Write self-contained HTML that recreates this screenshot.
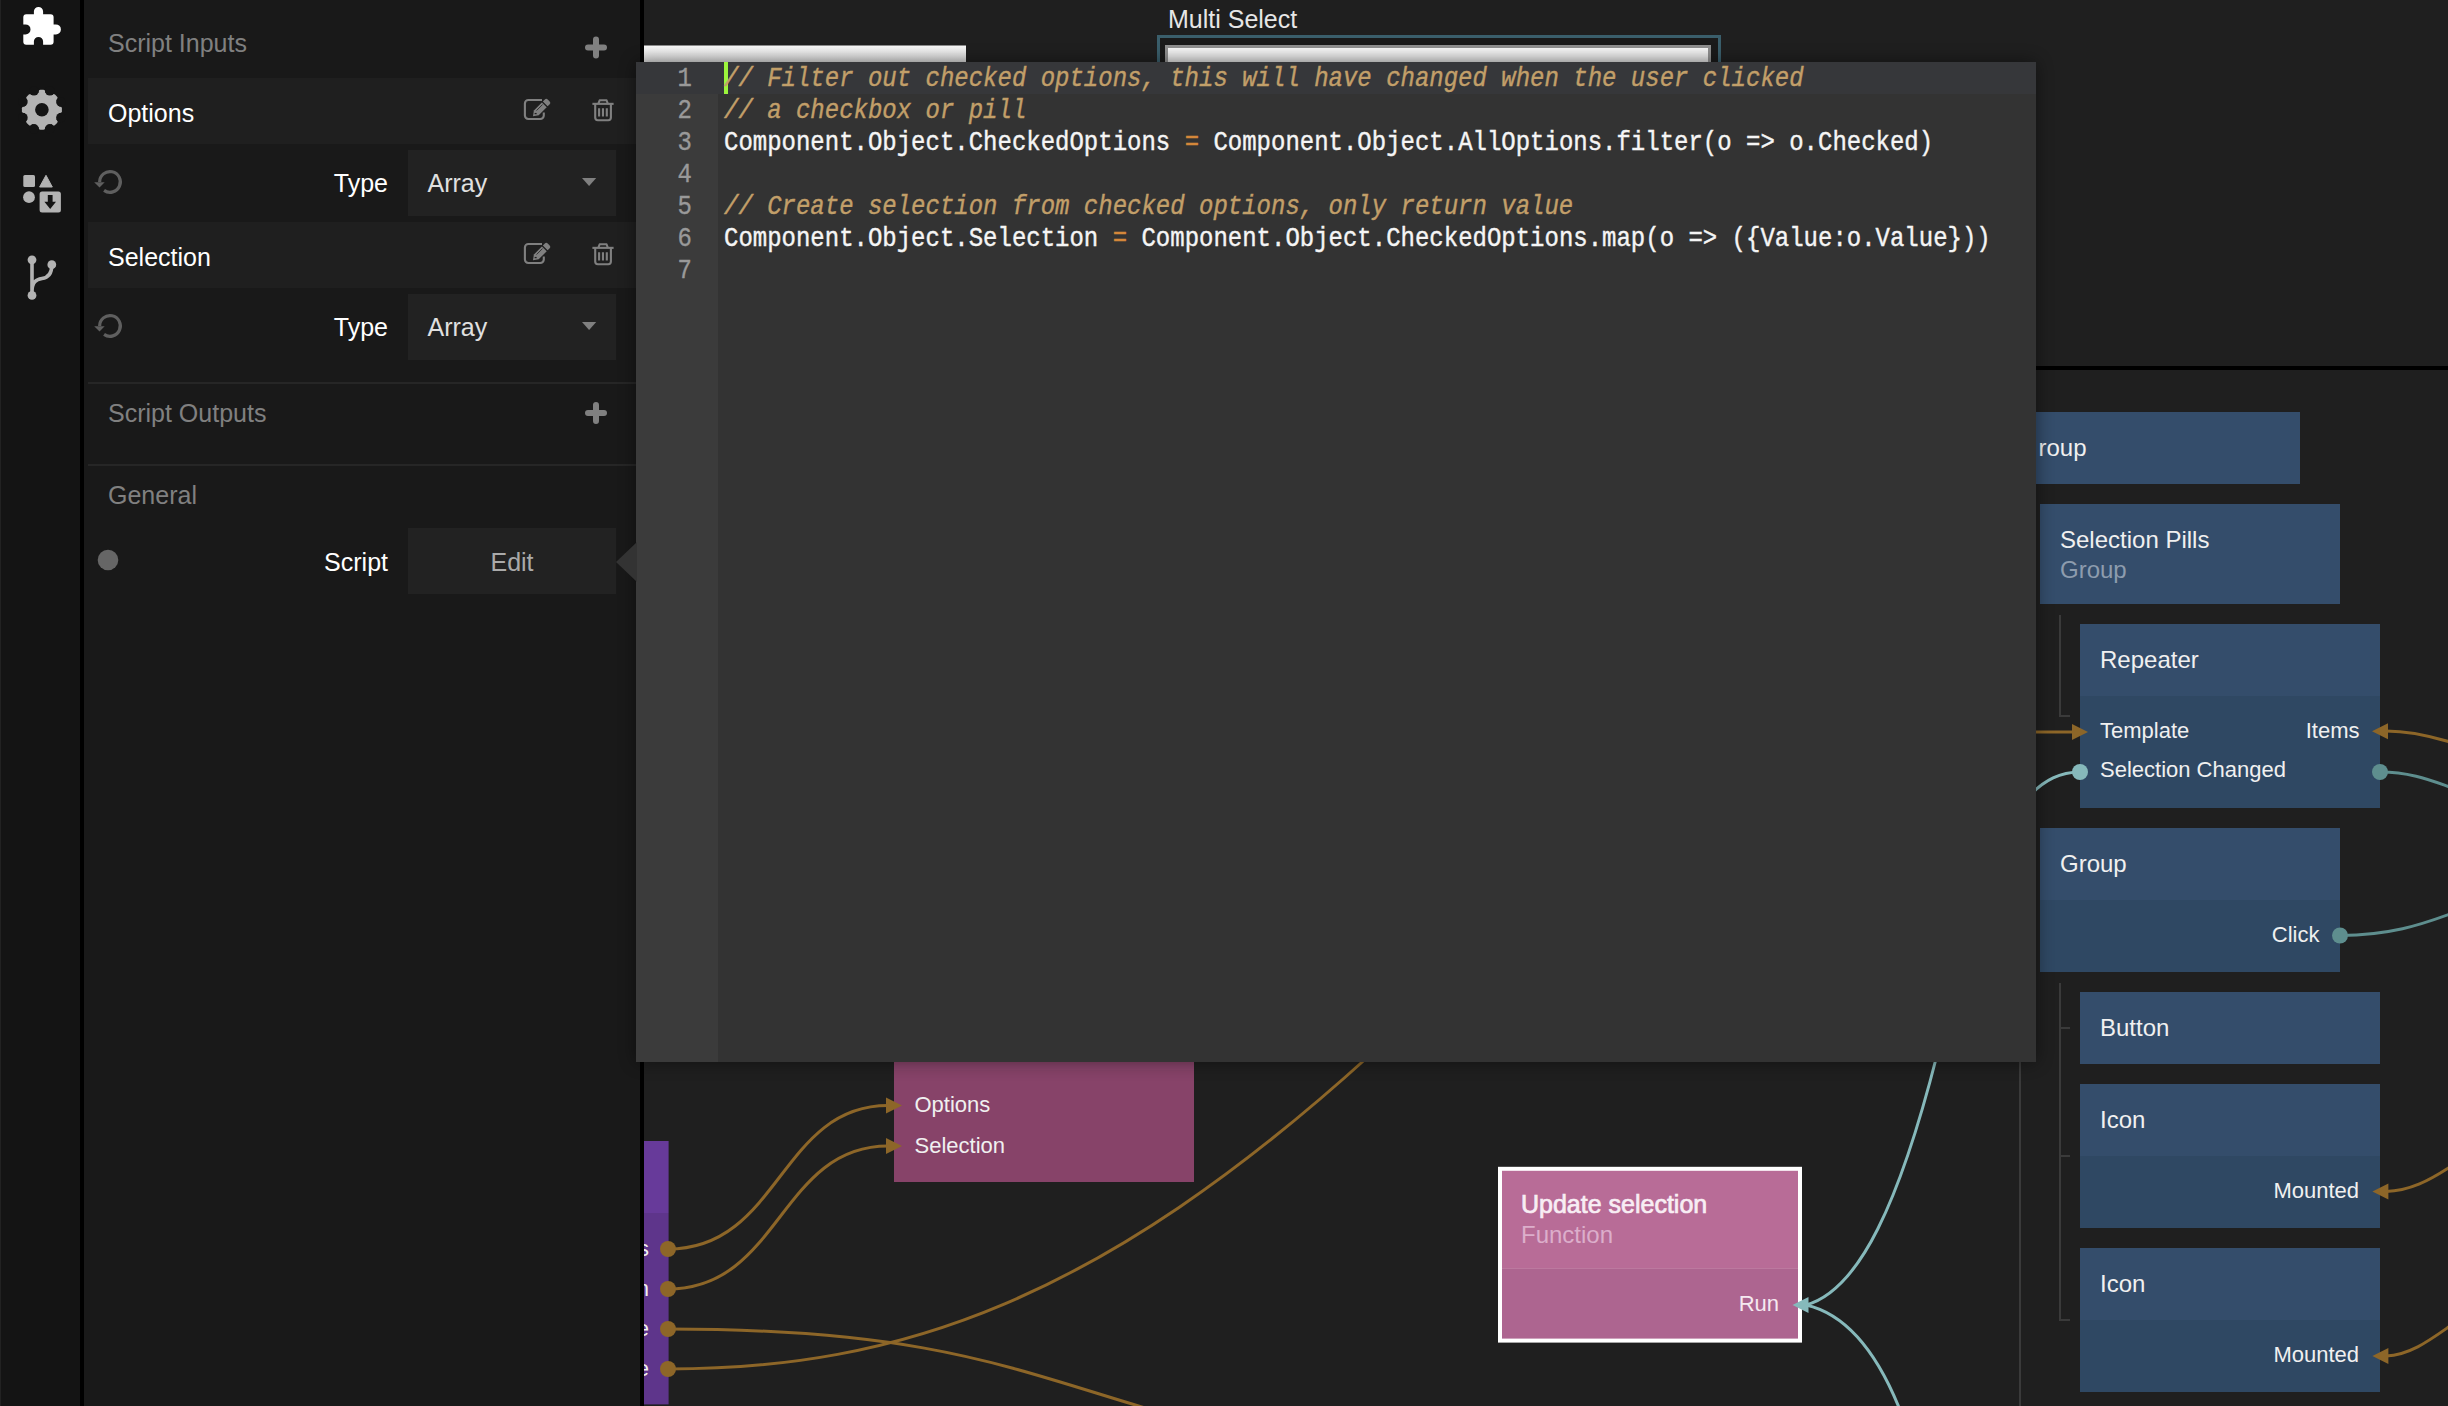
<!DOCTYPE html>
<html><head><meta charset="utf-8"><style>
html,body{margin:0;padding:0;background:#1f1f1f;overflow:hidden;width:2448px;height:1406px;}
svg{display:block;}

</style></head><body>
<svg width="2448" height="1406" viewBox="0 0 2448 1406"><rect x="0" y="0" width="2448" height="1406" fill="#1f1f1f" />
<rect x="0" y="0" width="80" height="1406" fill="#141414" />
<rect x="0" y="0" width="1" height="1406" fill="#222222" />
<rect x="80" y="0" width="4" height="1406" fill="#000000" />
<rect x="84" y="0" width="556" height="1406" fill="#191919" />
<rect x="640" y="0" width="4" height="1406" fill="#000000" />
<path fill="#ffffff" d="M26.3,14.2 H33.9 V11.6 A4.6,4.6 0 0 1 43.1,11.6 V14.2 H50.6 A3,3 0 0 1 53.6,17.2 V24.4 H55.9 A5,5 0 0 1 55.9,34.4 H53.6 V41.7 A3,3 0 0 1 50.6,44.7 H43.1 V41.6 A4.6,4.6 0 0 0 33.9,41.6 V44.7 H26.3 A3,3 0 0 1 23.3,41.7 V34.4 H25.5 A5,5 0 0 0 25.5,24.4 H23.3 V17.2 A3,3 0 0 1 26.3,14.2 Z"/>
<circle cx="41.9" cy="109.8" r="17.4" fill="#b3b3b3"/><rect x="38.6" y="89.8" width="6.6" height="8" rx="1.8" fill="#b3b3b3" transform="rotate(0 41.9 109.8)"/><rect x="38.6" y="89.8" width="6.6" height="8" rx="1.8" fill="#b3b3b3" transform="rotate(45 41.9 109.8)"/><rect x="38.6" y="89.8" width="6.6" height="8" rx="1.8" fill="#b3b3b3" transform="rotate(90 41.9 109.8)"/><rect x="38.6" y="89.8" width="6.6" height="8" rx="1.8" fill="#b3b3b3" transform="rotate(135 41.9 109.8)"/><rect x="38.6" y="89.8" width="6.6" height="8" rx="1.8" fill="#b3b3b3" transform="rotate(180 41.9 109.8)"/><rect x="38.6" y="89.8" width="6.6" height="8" rx="1.8" fill="#b3b3b3" transform="rotate(225 41.9 109.8)"/><rect x="38.6" y="89.8" width="6.6" height="8" rx="1.8" fill="#b3b3b3" transform="rotate(270 41.9 109.8)"/><rect x="38.6" y="89.8" width="6.6" height="8" rx="1.8" fill="#b3b3b3" transform="rotate(315 41.9 109.8)"/><circle cx="60.93" cy="117.68" r="4.8" fill="#141414"/><circle cx="49.78" cy="128.83" r="4.8" fill="#141414"/><circle cx="34.02" cy="128.83" r="4.8" fill="#141414"/><circle cx="22.87" cy="117.68" r="4.8" fill="#141414"/><circle cx="22.87" cy="101.92" r="4.8" fill="#141414"/><circle cx="34.02" cy="90.77" r="4.8" fill="#141414"/><circle cx="49.78" cy="90.77" r="4.8" fill="#141414"/><circle cx="60.93" cy="101.92" r="4.8" fill="#141414"/><circle cx="41.9" cy="109.8" r="6.8" fill="#141414"/>
<rect x="23.3" y="175" width="11.7" height="12" rx="1.5" fill="#b3b3b3"/>
<path d="M46,175.3 L52.3,187 L39.6,187 Z" fill="#b3b3b3" stroke="#b3b3b3" stroke-width="1" stroke-linejoin="round"/>
<circle cx="29" cy="197.2" r="5.9" fill="#b3b3b3"/>
<rect x="39.6" y="191.5" width="21.3" height="21.1" rx="2.5" fill="#b3b3b3"/>
<path d="M47.8,195 h4.8 v6.8 h3.4 l-5.8,7.2 l-5.8,-7.2 h3.4 z" fill="#141414"/>
<g fill="#b3b3b3"><circle cx="32" cy="259.8" r="4.4"/><circle cx="51.8" cy="264.7" r="4.4"/><circle cx="32" cy="295.4" r="4.4"/></g>
<path d="M32,260 V295 M32,292 C32,282 36,279.5 42,278.5 C49,277.5 51.8,272 51.8,265" stroke="#b3b3b3" stroke-width="3.6" fill="none"/>
<text x="108" y="52" font-size="25" fill="#808080" text-anchor="start" font-family="Liberation Sans, sans-serif" >Script Inputs</text>
<path d="M588,47.4 H604 M596,39.4 V55.4" stroke="#808080" stroke-width="6" stroke-linecap="round"/>
<rect x="88" y="78" width="560" height="66" fill="#1f1f1f" />
<text x="108" y="122" font-size="25" fill="#ffffff" text-anchor="start" font-family="Liberation Sans, sans-serif" >Options</text>
<path d="M542.00,100.00 H528.4 " stroke="none"/>
<path d="M542.00,100.00 H528.40 a3.5,3.5 0 0 0 -3.5,3.5 V115.50 a3.5,3.5 0 0 0 3.5,3.5 H540.30 a3.5,3.5 0 0 0 3.5,-3.5 V112.60" stroke="#808080" stroke-width="2.1" fill="none"/>
<path d="M533.00,116.20 L533.85,110.54 L541.91,102.48 L546.72,107.29 L538.66,115.35 Z" fill="#808080"/>
<path d="M542.83,101.56 L544.88,99.51 Q546.29,98.10 547.71,99.51 L549.69,101.49 Q551.10,102.91 549.69,104.32 L547.64,106.37 Z" fill="#808080"/>
<path d="M536.54,110.54 L542.55,104.53" stroke="#1f1f1f" stroke-width="0.8"/>
<path d="M534.63,113.58 L536.61,113.58" stroke="#1f1f1f" stroke-width="1.3"/>
<path d="M592.4,103.85 H613.6" stroke="#808080" stroke-width="2.1"/>
<path d="M598.3,103.85 L599.6,100.3 H606.6 L607.9,103.85" stroke="#808080" stroke-width="2" fill="none" stroke-linejoin="round"/>
<path d="M595.2,103.85 V117.6 a2.6,2.6 0 0 0 2.6,2.6 H608.3 a2.6,2.6 0 0 0 2.6,-2.6 V103.85" stroke="#808080" stroke-width="2.1" fill="none"/>
<path d="M599.1,108.2 V116.5 M602.95,108.2 V116.5 M606.8,108.2 V116.5" stroke="#808080" stroke-width="2.1"/>
<path d="M99.65,181.90 A10.35,10.35 0 1 1 104.06,190.38" stroke="#5f5f5f" stroke-width="3.2" fill="none"/>
<path d="M94.20,182.30 L104.70,182.30 L99.50,187.50 Z" fill="#5f5f5f"/>
<text x="388" y="192" font-size="25" fill="#ffffff" text-anchor="end" font-family="Liberation Sans, sans-serif" >Type</text>
<rect x="408" y="150" width="208" height="66" fill="#222222" />
<text x="427.5" y="192" font-size="25" fill="#e0e0e0" text-anchor="start" font-family="Liberation Sans, sans-serif" >Array</text>
<path d="M582,178 H596.2 L589.1,186 Z" fill="#808080"/>
<rect x="88" y="222" width="560" height="66" fill="#1f1f1f" />
<text x="108" y="266" font-size="25" fill="#ffffff" text-anchor="start" font-family="Liberation Sans, sans-serif" >Selection</text>
<path d="M542.00,244.00 H528.4 " stroke="none"/>
<path d="M542.00,244.00 H528.40 a3.5,3.5 0 0 0 -3.5,3.5 V259.50 a3.5,3.5 0 0 0 3.5,3.5 H540.30 a3.5,3.5 0 0 0 3.5,-3.5 V256.60" stroke="#808080" stroke-width="2.1" fill="none"/>
<path d="M533.00,260.20 L533.85,254.54 L541.91,246.48 L546.72,251.29 L538.66,259.35 Z" fill="#808080"/>
<path d="M542.83,245.56 L544.88,243.51 Q546.29,242.10 547.71,243.51 L549.69,245.49 Q551.10,246.91 549.69,248.32 L547.64,250.37 Z" fill="#808080"/>
<path d="M536.54,254.54 L542.55,248.53" stroke="#1f1f1f" stroke-width="0.8"/>
<path d="M534.63,257.58 L536.61,257.58" stroke="#1f1f1f" stroke-width="1.3"/>
<path d="M592.4,247.85 H613.6" stroke="#808080" stroke-width="2.1"/>
<path d="M598.3,247.85 L599.6,244.3 H606.6 L607.9,247.85" stroke="#808080" stroke-width="2" fill="none" stroke-linejoin="round"/>
<path d="M595.2,247.85 V261.6 a2.6,2.6 0 0 0 2.6,2.6 H608.3 a2.6,2.6 0 0 0 2.6,-2.6 V247.85" stroke="#808080" stroke-width="2.1" fill="none"/>
<path d="M599.1,252.2 V260.5 M602.95,252.2 V260.5 M606.8,252.2 V260.5" stroke="#808080" stroke-width="2.1"/>
<path d="M99.65,325.90 A10.35,10.35 0 1 1 104.06,334.38" stroke="#5f5f5f" stroke-width="3.2" fill="none"/>
<path d="M94.20,326.30 L104.70,326.30 L99.50,331.50 Z" fill="#5f5f5f"/>
<text x="388" y="336" font-size="25" fill="#ffffff" text-anchor="end" font-family="Liberation Sans, sans-serif" >Type</text>
<rect x="408" y="294" width="208" height="66" fill="#222222" />
<text x="427.5" y="336" font-size="25" fill="#e0e0e0" text-anchor="start" font-family="Liberation Sans, sans-serif" >Array</text>
<path d="M582,322 H596.2 L589.1,330 Z" fill="#808080"/>
<rect x="88" y="382" width="560" height="2" fill="#262626" />
<text x="108" y="422.3" font-size="25" fill="#808080" text-anchor="start" font-family="Liberation Sans, sans-serif" >Script Outputs</text>
<path d="M588,413 H604 M596,405 V421" stroke="#808080" stroke-width="6" stroke-linecap="round"/>
<rect x="88" y="464" width="560" height="2" fill="#262626" />
<text x="108" y="503.6" font-size="25" fill="#808080" text-anchor="start" font-family="Liberation Sans, sans-serif" >General</text>
<circle cx="108" cy="560" r="10.3" fill="#666666"/>
<text x="388" y="570.6" font-size="25" fill="#ffffff" text-anchor="end" font-family="Liberation Sans, sans-serif" >Script</text>
<rect x="408" y="528" width="208" height="66" fill="#222222" />
<text x="512" y="570.6" font-size="25" fill="#aaaaaa" text-anchor="middle" font-family="Liberation Sans, sans-serif" >Edit</text>
<defs><clipPath id="cc"><rect x="644" y="0" width="1804" height="1406"/></clipPath></defs><g clip-path="url(#cc)">
<defs><linearGradient id="wg" x1="0" y1="0" x2="0" y2="1"><stop offset="0" stop-color="#fafafa"/><stop offset="1" stop-color="#d2d2d2"/></linearGradient></defs>
<rect x="644" y="45.5" width="322" height="17" fill="url(#wg)" />
<text x="1168" y="28" font-size="25" fill="#e6e6e6" text-anchor="start" font-family="Liberation Sans, sans-serif" >Multi Select</text>
<rect x="1158.5" y="36.5" width="561" height="30" fill="#1a1a1a" stroke="#3a5e6b" stroke-width="3"/>
<rect x="1166.5" y="46.5" width="543" height="20" fill="url(#wg)" stroke="#8f8f8f" stroke-width="3"/>
<rect x="2036" y="366" width="412" height="4" fill="#000000" />
<rect x="2019" y="1062" width="2" height="344" fill="#3a3a3a" />
<rect x="2059" y="615" width="2" height="102" fill="#3a3a3a" />
<rect x="2059" y="715" width="11" height="2" fill="#3a3a3a" />
<rect x="2059" y="983" width="2" height="338" fill="#3a3a3a" />
<rect x="2059" y="1027" width="11" height="2" fill="#3a3a3a" />
<rect x="2059" y="1155" width="11" height="2" fill="#3a3a3a" />
<rect x="2059" y="1319" width="11" height="2" fill="#3a3a3a" />
<rect x="1996" y="412" width="304" height="72" fill="#344d6b" />
<text x="2016" y="456" font-size="24" fill="#f0f0f0" text-anchor="start" font-family="Liberation Sans, sans-serif" ></text>
<text x="2038.5" y="456" font-size="24" fill="#f0f0f0" text-anchor="start" font-family="Liberation Sans, sans-serif" >roup</text>
<rect x="2040" y="504" width="300" height="100" fill="#344d6b" />
<text x="2060" y="548" font-size="24" fill="#f0f0f0" text-anchor="start" font-family="Liberation Sans, sans-serif" >Selection Pills</text>
<text x="2060" y="577.6" font-size="24" fill="#8d9cae" text-anchor="start" font-family="Liberation Sans, sans-serif" >Group</text>
<rect x="2080" y="624" width="300" height="184" fill="#344d6b" />
<rect x="2080" y="696" width="300" height="112" fill="#2f4863" />
<text x="2100" y="668" font-size="24" fill="#f0f0f0" text-anchor="start" font-family="Liberation Sans, sans-serif" >Repeater</text>
<text x="2100" y="738" font-size="22" fill="#f0f0f0" text-anchor="start" font-family="Liberation Sans, sans-serif" >Template</text>
<text x="2359.5" y="738" font-size="22" fill="#f0f0f0" text-anchor="end" font-family="Liberation Sans, sans-serif" >Items</text>
<text x="2100" y="777" font-size="22" fill="#f0f0f0" text-anchor="start" font-family="Liberation Sans, sans-serif" >Selection Changed</text>
<rect x="2040" y="828" width="300" height="144" fill="#344d6b" />
<rect x="2040" y="900" width="300" height="72" fill="#2f4863" />
<text x="2060" y="872" font-size="24" fill="#f0f0f0" text-anchor="start" font-family="Liberation Sans, sans-serif" >Group</text>
<text x="2319.5" y="942" font-size="22" fill="#f0f0f0" text-anchor="end" font-family="Liberation Sans, sans-serif" >Click</text>
<rect x="2080" y="992" width="300" height="72" fill="#344d6b" />
<text x="2100" y="1036" font-size="24" fill="#f0f0f0" text-anchor="start" font-family="Liberation Sans, sans-serif" >Button</text>
<rect x="2080" y="1084" width="300" height="144" fill="#344d6b" />
<rect x="2080" y="1156" width="300" height="72" fill="#2f4863" />
<text x="2100" y="1128" font-size="24" fill="#f0f0f0" text-anchor="start" font-family="Liberation Sans, sans-serif" >Icon</text>
<text x="2359" y="1198.3" font-size="22" fill="#f0f0f0" text-anchor="end" font-family="Liberation Sans, sans-serif" >Mounted</text>
<rect x="2080" y="1248" width="300" height="144" fill="#344d6b" />
<rect x="2080" y="1320" width="300" height="72" fill="#2f4863" />
<text x="2100" y="1292" font-size="24" fill="#f0f0f0" text-anchor="start" font-family="Liberation Sans, sans-serif" >Icon</text>
<text x="2359" y="1362.3" font-size="22" fill="#f0f0f0" text-anchor="end" font-family="Liberation Sans, sans-serif" >Mounted</text>
<rect x="894" y="1040" width="300" height="142" fill="#874369" />
<rect x="894" y="1062" width="300" height="8" fill="#8a456c" />
<text x="914.5" y="1112" font-size="22" fill="#f0f0f0" text-anchor="start" font-family="Liberation Sans, sans-serif" >Options</text>
<text x="914.5" y="1152.7" font-size="22" fill="#f0f0f0" text-anchor="start" font-family="Liberation Sans, sans-serif" >Selection</text>
<rect x="644" y="1141" width="24.6" height="72" fill="#673a9a" />
<rect x="644" y="1213" width="24.6" height="191.4" fill="#5e358b" />
<text x="649" y="1256" font-size="22" fill="#f0f0f0" text-anchor="end" font-family="Liberation Sans, sans-serif" >s</text>
<text x="649" y="1296" font-size="22" fill="#f0f0f0" text-anchor="end" font-family="Liberation Sans, sans-serif" >n</text>
<text x="649" y="1336" font-size="22" fill="#f0f0f0" text-anchor="end" font-family="Liberation Sans, sans-serif" >e</text>
<text x="649" y="1376" font-size="22" fill="#f0f0f0" text-anchor="end" font-family="Liberation Sans, sans-serif" >e</text>
<rect x="1498" y="1166.8" width="304" height="175.8" fill="#ffffff" />
<rect x="1502" y="1170.8" width="296" height="98" fill="#b86c97" />
<rect x="1502" y="1268.6" width="296" height="70" fill="#ad6590" />
<text x="1521" y="1213" font-size="25" fill="#f8eef4" text-anchor="start" font-family="Liberation Sans, sans-serif" stroke="#f8eef4" stroke-width="0.7">Update selection</text>
<text x="1521" y="1243" font-size="24" fill="#dcaecb" text-anchor="start" font-family="Liberation Sans, sans-serif" >Function</text>
<text x="1779" y="1311" font-size="22" fill="#f5e9f0" text-anchor="end" font-family="Liberation Sans, sans-serif" >Run</text>
<path d="M668,1249 C780,1249 780,1105.5 888,1105.5" stroke="#8d6628" stroke-width="3" fill="none"/>
<path d="M668,1289 C780,1289 780,1146 888,1146" stroke="#8d6628" stroke-width="3" fill="none"/>
<path d="M668,1329 C925,1329 1010,1368 1152,1410" stroke="#8d6628" stroke-width="3" fill="none"/>
<path d="M668,1369 C900,1369 1100,1300 1370,1055" stroke="#8d6628" stroke-width="3" fill="none"/>
<path d="M886,1097.5 L902,1105.5 L886,1113.5 Z" fill="#8d6628"/>
<path d="M886,1138 L902,1146 L886,1154 Z" fill="#8d6628"/>
<circle cx="668" cy="1249" r="8" fill="#8d6628"/>
<circle cx="668" cy="1289" r="8" fill="#8d6628"/>
<circle cx="668" cy="1329" r="8" fill="#8d6628"/>
<circle cx="668" cy="1369" r="8" fill="#8d6628"/>
<path d="M1806,1305 C1860,1290 1900,1200 1937,1055" stroke="#86b9bb" stroke-width="3" fill="none"/>
<path d="M1806,1305 C1850,1315 1880,1360 1900,1410" stroke="#86b9bb" stroke-width="3" fill="none"/>
<path d="M1808.5,1297 L1792.5,1305 L1808.5,1313 Z" fill="#86b9bb"/>
<path d="M2030,732 H2075" stroke="#8d6628" stroke-width="3"/>
<path d="M2072,724 L2088,732 L2072,740 Z" fill="#8d6628"/>
<path d="M2030,795 C2045,780 2060,772 2080,772" stroke="#86b9bb" stroke-width="3" fill="none"/>
<circle cx="2080" cy="772" r="8" fill="#86b9bb"/>
<path d="M2386,731 C2410,731 2430,736 2450,742" stroke="#8d6628" stroke-width="3" fill="none"/>
<path d="M2388,723.2 L2372,731.2 L2388,739.2 Z" fill="#8d6628"/>
<path d="M2380,772 C2410,772 2430,780 2450,787" stroke="#5e8e8e" stroke-width="3" fill="none"/>
<circle cx="2380" cy="772" r="8" fill="#5e8e8e"/>
<path d="M2340,935.5 C2390,935 2420,925 2450,914" stroke="#5e8e8e" stroke-width="3" fill="none"/>
<circle cx="2340" cy="935.5" r="8" fill="#5e8e8e"/>
<path d="M2386,1191.5 C2410,1191 2430,1180 2450,1167" stroke="#8d6628" stroke-width="3" fill="none"/>
<path d="M2388.4,1183.5 L2372.4,1191.5 L2388.4,1199.5 Z" fill="#8d6628"/>
<path d="M2386,1356 C2410,1355 2430,1340 2450,1326" stroke="#8d6628" stroke-width="3" fill="none"/>
<path d="M2388.4,1348 L2372.4,1356 L2388.4,1364 Z" fill="#8d6628"/>
</g>
<defs><filter id="sh" x="-10%" y="-10%" width="120%" height="120%"><feGaussianBlur stdDeviation="9"/></filter></defs>
<rect x="636" y="62" width="1400" height="1000" fill="#000" opacity="0.45" filter="url(#sh)"/>
<rect x="636" y="62" width="1400" height="1000" fill="#333333" />
<rect x="636" y="94" width="82" height="968" fill="#3b3b3b" />
<rect x="636" y="62" width="1400" height="32" fill="#36373a" />
<rect x="724" y="62" width="4" height="32" fill="#9cf53c" />
<text x="692" y="86" font-size="24" fill="#999999" text-anchor="end" font-family="Liberation Mono, monospace" transform="translate(0,86) scale(1,1.18) translate(0,-86)" stroke="#999999" stroke-width="0.3">1</text>
<text x="692" y="118" font-size="24" fill="#999999" text-anchor="end" font-family="Liberation Mono, monospace" transform="translate(0,118) scale(1,1.18) translate(0,-118)" stroke="#999999" stroke-width="0.3">2</text>
<text x="692" y="150" font-size="24" fill="#999999" text-anchor="end" font-family="Liberation Mono, monospace" transform="translate(0,150) scale(1,1.18) translate(0,-150)" stroke="#999999" stroke-width="0.3">3</text>
<text x="692" y="182" font-size="24" fill="#999999" text-anchor="end" font-family="Liberation Mono, monospace" transform="translate(0,182) scale(1,1.18) translate(0,-182)" stroke="#999999" stroke-width="0.3">4</text>
<text x="692" y="214" font-size="24" fill="#999999" text-anchor="end" font-family="Liberation Mono, monospace" transform="translate(0,214) scale(1,1.18) translate(0,-214)" stroke="#999999" stroke-width="0.3">5</text>
<text x="692" y="246" font-size="24" fill="#999999" text-anchor="end" font-family="Liberation Mono, monospace" transform="translate(0,246) scale(1,1.18) translate(0,-246)" stroke="#999999" stroke-width="0.3">6</text>
<text x="692" y="278" font-size="24" fill="#999999" text-anchor="end" font-family="Liberation Mono, monospace" transform="translate(0,278) scale(1,1.18) translate(0,-278)" stroke="#999999" stroke-width="0.3">7</text>
<text x="724" y="86" font-size="24" font-family="Liberation Mono, monospace" xml:space="preserve" stroke-width="0.35" transform="translate(0,86) scale(1,1.18) translate(0,-86)"><tspan fill="#c29f69" stroke="#c29f69" font-style="italic">// Filter out checked options, this will have changed when the user clicked</tspan></text>
<text x="724" y="118" font-size="24" font-family="Liberation Mono, monospace" xml:space="preserve" stroke-width="0.35" transform="translate(0,118) scale(1,1.18) translate(0,-118)"><tspan fill="#c29f69" stroke="#c29f69" font-style="italic">// a checkbox or pill</tspan></text>
<text x="724" y="150" font-size="24" font-family="Liberation Mono, monospace" xml:space="preserve" stroke-width="0.35" transform="translate(0,150) scale(1,1.18) translate(0,-150)"><tspan fill="#f5f5f5" stroke="#f5f5f5">Component.Object.CheckedOptions </tspan><tspan fill="#d4873a" stroke="#d4873a">=</tspan><tspan fill="#f5f5f5" stroke="#f5f5f5"> Component.Object.AllOptions.filter(o =&gt; o.Checked)</tspan></text>
<text x="724" y="214" font-size="24" font-family="Liberation Mono, monospace" xml:space="preserve" stroke-width="0.35" transform="translate(0,214) scale(1,1.18) translate(0,-214)"><tspan fill="#c29f69" stroke="#c29f69" font-style="italic">// Create selection from checked options, only return value</tspan></text>
<text x="724" y="246" font-size="24" font-family="Liberation Mono, monospace" xml:space="preserve" stroke-width="0.35" transform="translate(0,246) scale(1,1.18) translate(0,-246)"><tspan fill="#f5f5f5" stroke="#f5f5f5">Component.Object.Selection </tspan><tspan fill="#d4873a" stroke="#d4873a">=</tspan><tspan fill="#f5f5f5" stroke="#f5f5f5"> Component.Object.CheckedOptions.map(o =&gt; ({Value:o.Value}))</tspan></text>
<path d="M616,562 L637,542 L637,582 Z" fill="#333333"/></svg>
</body></html>
